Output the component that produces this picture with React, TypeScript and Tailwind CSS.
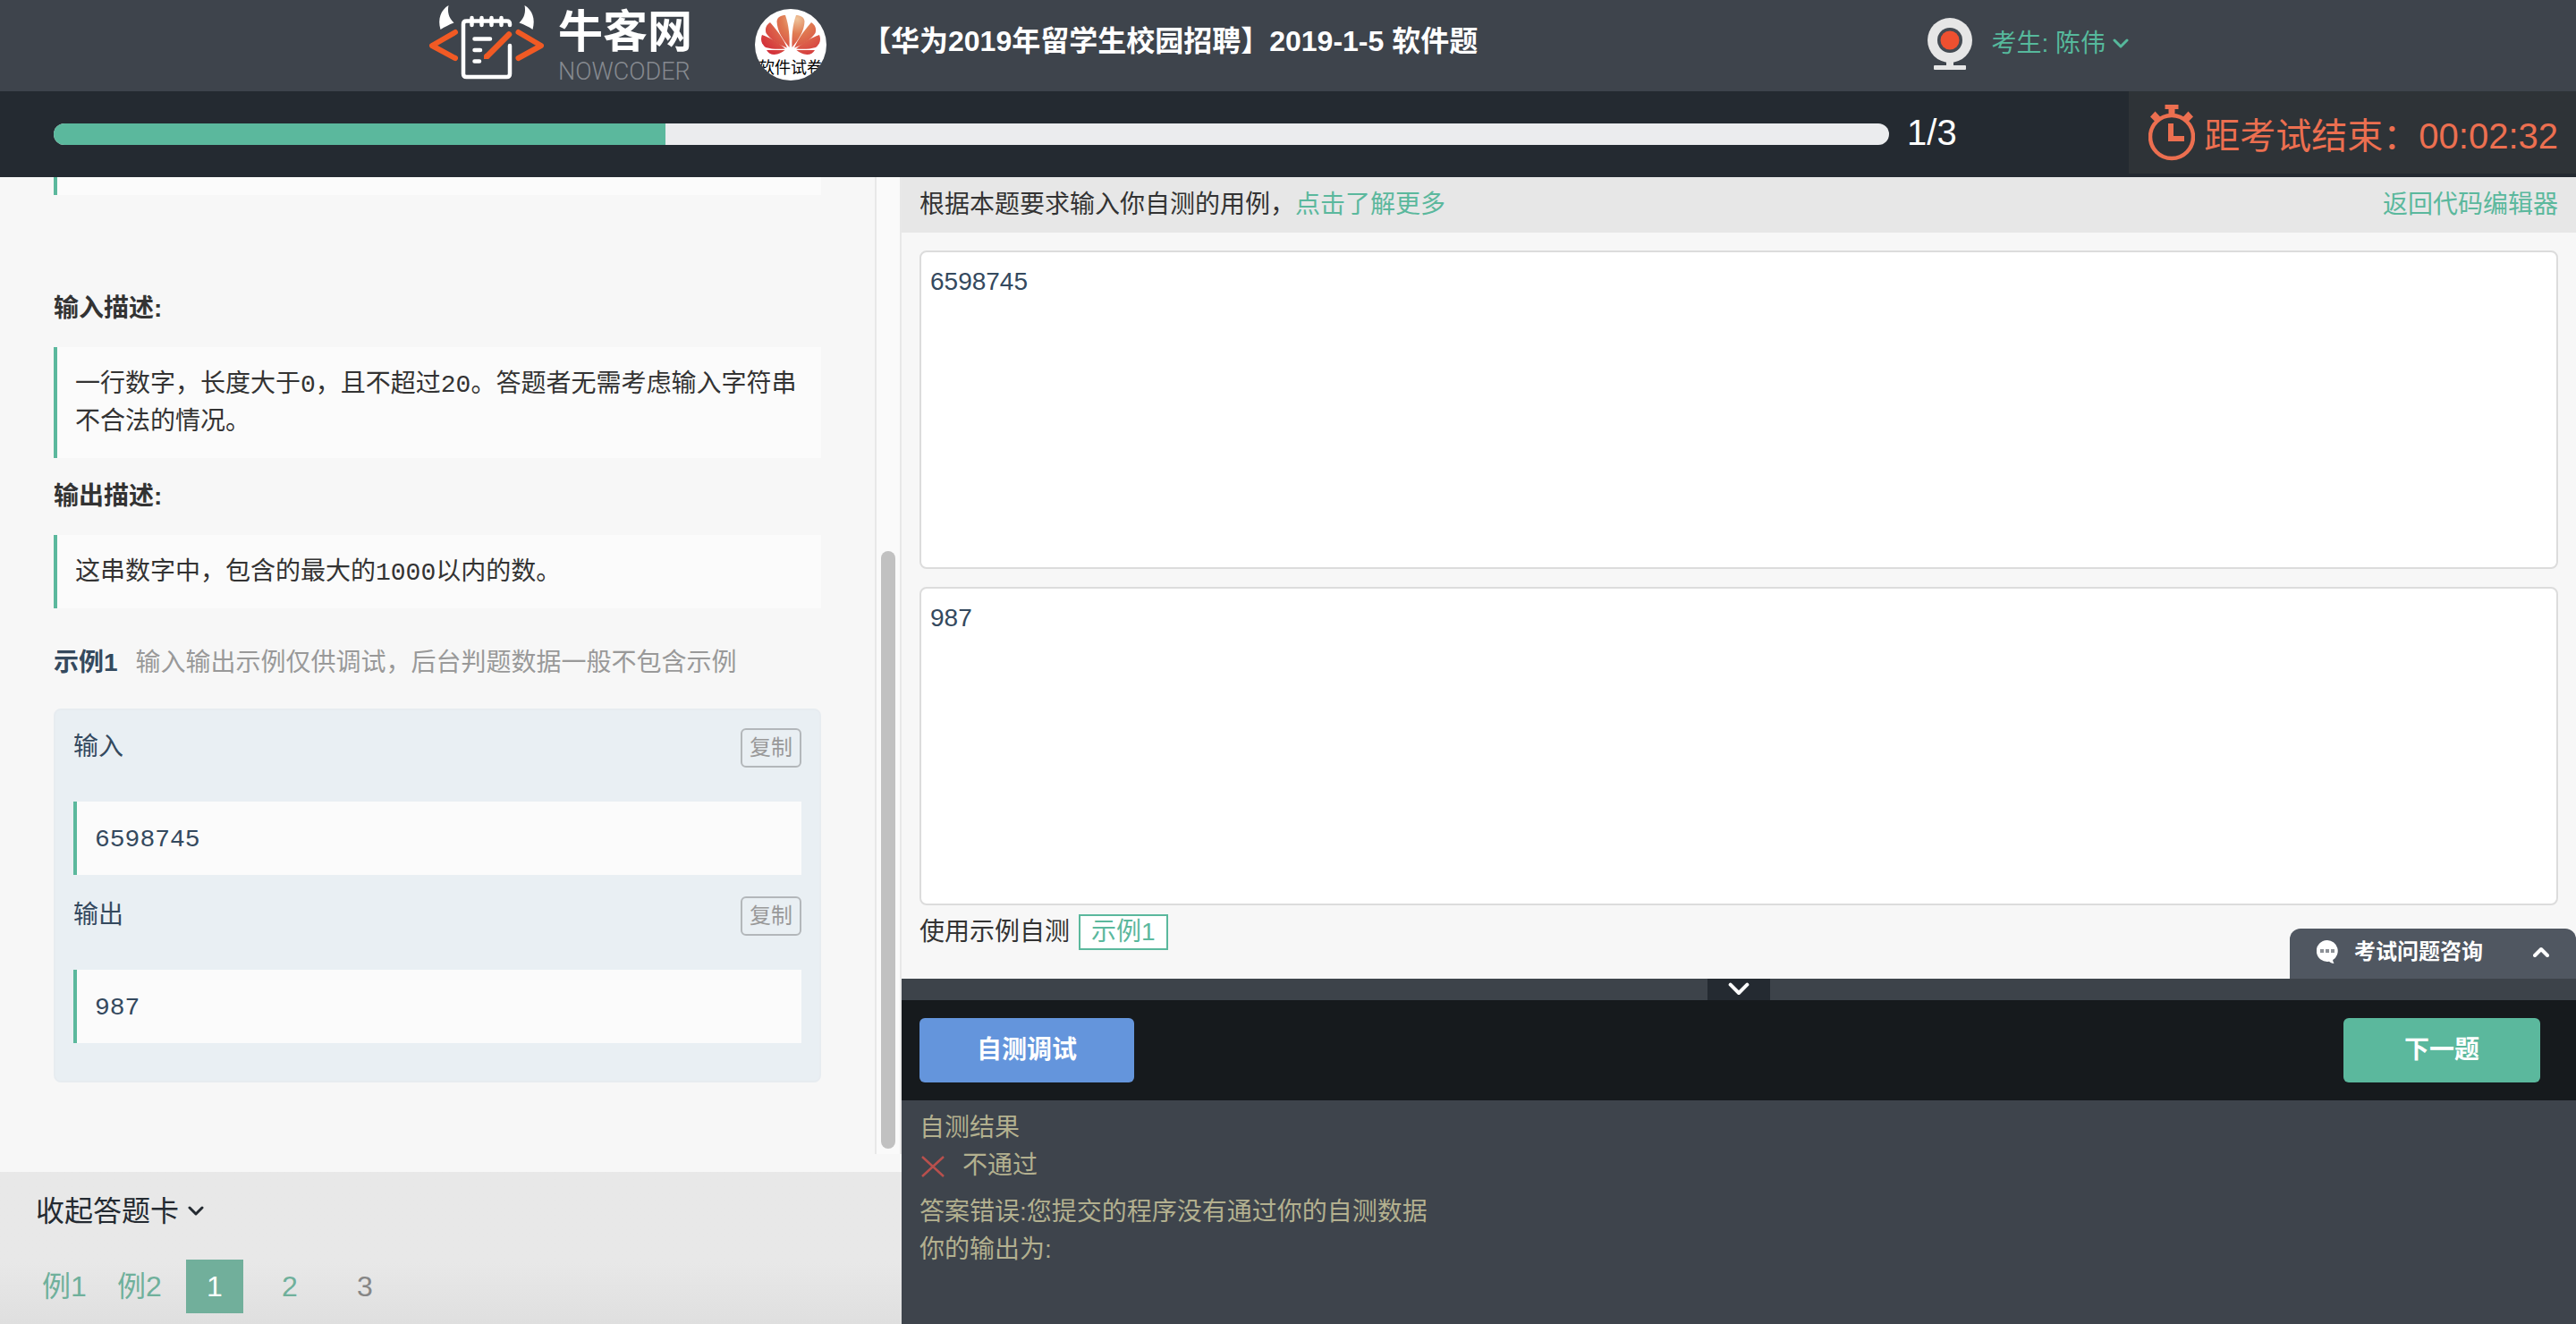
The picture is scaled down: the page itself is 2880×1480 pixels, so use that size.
import { useState } from "react";

const samples = [
  { id: "in", label: "输入", value: "6598745" },
  { id: "out", label: "输出", value: "987" },
];

const questions = [
  { label: "例1", state: "done" },
  { label: "例2", state: "done" },
  { label: "1", state: "current" },
  { label: "2", state: "done" },
  { label: "3", state: "todo" },
];

const questionStyles: Record<string, string> = {
  done: "text-[#6fb09b]",
  current: "bg-[#71af9b] text-white",
  todo: "text-[#868686]",
};

function Chevron({ className, up = false, weight = 3 }: { className: string; up?: boolean; weight?: number }) {
  return (
    <svg className={className} viewBox="0 0 18 12" fill="none" stroke="currentColor" strokeWidth={weight} strokeLinecap="round" strokeLinejoin="round" aria-hidden="true">
      <path d={up ? "M2 10l7-7 7 7" : "M2 2l7 7 7-7"} />
    </svg>
  );
}

function NowcoderMark() {
  return (
    <svg className="h-24 w-32 shrink-0" viewBox="0 0 128 96" fill="none" aria-hidden="true">
      <path d="M21.500 6C13 11 9 21 12.500 33C17.500 30 22 27.500 27.500 25.500C21.500 20 20 13 21.500 6Z" fill="#fff" />
      <path d="M106.500 6C115 11 119 21 115.500 33C111.500 30 106 27.500 100.500 25.500C106.500 20 108 13 106.500 6Z" fill="#fff" />
      <path d="M90 28V27Q90 23.500 86.500 23.500H41.500Q38 23.500 38 27V82.500Q38 86 41.500 86H86.500Q90 86 90 82.500V51" stroke="#fff" strokeWidth="4.500" strokeLinecap="round" />
      <path d="M47.500 20v8M58.500 20v8M69.500 20v8M80.500 20v8" stroke="#fff" strokeWidth="4.500" strokeLinecap="round" />
      <path d="M50.500 43.500H68M50.500 56H57M50.500 68.500H56" stroke="#fff" strokeWidth="4.500" strokeLinecap="round" />
      <path d="M29 36L3 51L29 65M99.500 36L125 51L99.500 65" stroke="#f15a24" strokeWidth="6" strokeLinecap="round" strokeLinejoin="round" />
      <path d="M89 38.500L65 62.500" stroke="#f15a24" strokeWidth="6.500" strokeLinecap="round" />
      <path d="M62.500 60L61 62V66H65.500L67.500 65Z" fill="#f15a24" />
    </svg>
  );
}

function HuaweiBadge() {
  return (
    <div className="relative size-20 shrink-0 overflow-hidden rounded-full bg-white">
      <svg className="size-20" viewBox="0 0 80 80" aria-hidden="true">
        <defs>
          <radialGradient id="petal" gradientUnits="userSpaceOnUse" cx="47" cy="11" r="48">
            <stop offset="0" stopColor="#eec39a" />
            <stop offset="0.350" stopColor="#e07b52" />
            <stop offset="1" stopColor="#d3303a" />
          </radialGradient>
        </defs>
        <g fill="url(#petal)">
          <path d="M38.500 43C39 31 38 18 34 7C29 7 25 9 24.500 14C25 25 31 34 38.500 43Z" />
          <path d="M41.500 43C41 31 42 18 46 7C51 7 55 9 55.500 14C55 25 49 34 41.500 43Z" />
          <path d="M36 43.500C32 34 25 24 17 15C12.500 18 11 22 12.500 27C17 34 26 40 36 43.500Z" />
          <path d="M44 43.500C48 34 55 24 63 15C67.500 18 69 22 67.500 27C63 34 54 40 44 43.500Z" />
          <path d="M34 44.500C25 37 17 32 8 29C6 34 7 39 12 43C19 45 26 45 34 44.500Z" />
          <path d="M46 44.500C55 37 63 32 72 29C74 34 73 39 68 43C61 45 54 45 46 44.500Z" />
          <path d="M33.500 46H13C15 50 20 52 25 50.500C28 49.500 31 48 33.500 46Z" />
          <path d="M46.500 46H67C65 50 60 52 55 50.500C52 49.500 49 48 46.500 46Z" />
        </g>
      </svg>
      <span className="absolute top-14 left-1/2 -translate-x-1/2 text-lg/5 whitespace-nowrap text-black">软件试卷</span>
    </div>
  );
}

function Webcam() {
  return (
    <svg className="h-[58px] w-[52px] shrink-0" viewBox="0 0 52 58" aria-hidden="true">
      <path d="M22 46h8v8h-8z" fill="#e6e6e6" />
      <circle cx="26" cy="25" r="25" fill="#e6e6e6" />
      <circle cx="26" cy="25" r="14" fill="#434a52" />
      <circle cx="26" cy="25" r="10.500" fill="#ee5030" />
      <rect x="8" y="53" width="36" height="5" rx="1" fill="#e6e6e6" />
    </svg>
  );
}

function Stopwatch() {
  return (
    <svg className="h-16 w-[52px] shrink-0" viewBox="0 0 52 64" fill="none" aria-hidden="true">
      <circle cx="26" cy="37" r="24" stroke="#ec6f50" strokeWidth="4.500" />
      <path d="M18.500 1h15v5h-4v6h-7v-6h-4z" fill="#ec6f50" />
      <path d="M2 14.500L7.500 8.500L14 15.500L8 20.500zM50 14.500L44.500 8.500L38 15.500L44 20.500z" fill="#ec6f50" />
      <path d="M22 22h6v14h12v6H22z" fill="#ec6f50" />
    </svg>
  );
}

function Quote({ children }: { children: string }) {
  return (
    <pre className="border-l-4 border-[#5bb89d] bg-[#fbfbfb] px-5 pt-[22px] pb-[18px] font-['Liberation_Mono','Noto_Sans_CJK_SC',monospace] text-[28px]/[42px] whitespace-pre-wrap">
      {children}
    </pre>
  );
}

export default function App() {
  const [input, setInput] = useState("6598745");
  const [expected, setExpected] = useState("987");
  const current = 1;
  const total = 3;

  return (
    <div className="flex h-screen flex-col overflow-hidden bg-[#f7f7f7] font-['Liberation_Sans','Noto_Sans_CJK_SC',sans-serif] text-[28px]/[42px] text-[#333]">
      <header className="h-[102px] shrink-0 bg-[#3e444c]">
        <div className="mx-auto flex h-full max-w-[1920px] items-start">
          <a href="#" className="flex items-start">
            <NowcoderMark />
            <span className="ml-4 flex flex-col pt-3">
              <span className="text-[50px]/[48px] font-bold text-white">牛客网</span>
              <span className="pt-1.5 font-[Roboto,sans-serif] text-[27px]/[28px] font-light text-[#868a90]">NOWCODER</span>
            </span>
          </a>
          <div className="ml-[70px] pt-2.5">
            <HuaweiBadge />
          </div>
          <h1 className="ml-10 pt-[22px] text-[32px]/[48px] font-bold whitespace-nowrap text-white">【华为2019年留学生校园招聘】2019-1-5 软件题</h1>
          <div className="ml-auto flex items-start pr-5">
            <div className="pt-5">
              <Webcam />
            </div>
            <button type="button" className="mt-7 ml-5 flex items-center gap-2 whitespace-nowrap text-[#56b99c]">
              考生: 陈伟
              <Chevron className="h-3 w-[18px]" />
            </button>
          </div>
        </div>
      </header>

      <div className="flex h-24 shrink-0 bg-[#242a31]">
        <div className="flex flex-1 items-center pb-1 pl-[60px]">
          <div className="mt-1 h-6 flex-1 overflow-hidden rounded-full bg-[#ebecee]" role="progressbar" aria-label="答题进度" aria-valuenow={current} aria-valuemax={total}>
            <div className="h-full bg-[#5bb89d]" style={{ width: `${(current / total) * 100}%` }} />
          </div>
          <span className="w-[268px] pl-5 text-[40px]/[48px] text-white">{current}/{total}</span>
        </div>
        <div className="flex h-[92px] w-[500px] items-center justify-end gap-2.5 bg-[#2e3337] pr-5 text-[40px]/[60px] whitespace-nowrap text-[#ec6f50]">
          <Stopwatch />
          <span className="pt-2">距考试结束：00:02:32</span>
        </div>
      </div>

      <main className="flex min-h-0 flex-1">
        <section className="flex w-[35%] shrink-0 flex-col">
          <div className="flex min-h-0 flex-1 pb-5">
            <div className="min-w-0 flex-1 overflow-hidden pr-[60px] pl-[60px]">
              <div className="h-5 border-l-4 border-[#5bb89d] bg-[#fbfbfb]" />
              <h2 className="mt-[106px] mb-[22px] font-bold">输入描述:</h2>
              <Quote>一行数字，长度大于0，且不超过20。答题者无需考虑输入字符串不合法的情况。</Quote>
              <h2 className="my-[22px] font-bold">输出描述:</h2>
              <Quote>这串数字中，包含的最大的1000以内的数。</Quote>
              <div className="mt-10 mb-[30px] flex gap-5 whitespace-nowrap">
                <h2 className="font-bold text-[#34495e]">示例1</h2>
                <p className="text-[#999]">输入输出示例仅供调试，后台判题数据一般不包含示例</p>
              </div>
              <div className="flex flex-col gap-6 rounded-lg border-2 border-[#e7ecf0] bg-[#e9eff3] px-5 pt-5 pb-[42px] text-[#34495e]">
                {samples.map((s) => (
                  <div key={s.id}>
                    <div className="mb-[38px] flex h-11 justify-between">
                      <h3>{s.label}</h3>
                      <button type="button" className="w-[68px] rounded-md border-2 border-[#b3b7ba] text-2xl/10 text-[#999]">
                        复制
                      </button>
                    </div>
                    <Quote>{s.value}</Quote>
                  </div>
                ))}
              </div>
            </div>
            <div className="flex w-[30px] shrink-0 flex-col border-x-2 border-[#e8e8e8] bg-[#fafafa] px-[5px] pb-1.5">
              <div className="mt-auto h-[668px] rounded-full bg-[#c1c1c1]" />
            </div>
          </div>
          <nav className="shrink-0 bg-linear-to-b from-[#e8e8e8] from-60% to-[#dfdfdf] px-10 pt-5 pb-3" aria-label="答题卡">
            <button type="button" className="flex items-center gap-2.5 text-[32px]/[48px] text-[#242a31]">
              收起答题卡
              <Chevron className="h-3 w-[18px]" />
            </button>
            <div className="mt-[30px] flex gap-5">
              {questions.map((q) => (
                <button key={q.label} type="button" className={`h-[60px] w-16 text-[32px]/[56px] whitespace-nowrap ${questionStyles[q.state]}`}>
                  {q.label}
                </button>
              ))}
            </div>
          </nav>
        </section>

        <section className="flex min-w-0 flex-1 flex-col">
          <div className="flex h-[62px] shrink-0 justify-between bg-[#e7e7e7] px-5 pt-2.5">
            <p>
              根据本题要求输入你自测的用例，
              <a href="#" className="text-[#5bb89d]">点击了解更多</a>
            </p>
            <a href="#" className="text-[#5bb89d]">返回代码编辑器</a>
          </div>

          <div className="relative flex min-h-0 flex-1 flex-col px-5 pt-5 pb-8">
            <textarea
              aria-label="自测输入"
              className="min-h-0 flex-1 resize-none rounded-lg border-2 border-[#dcdcdc] bg-white px-2.5 py-3 text-[#34495e] outline-none"
              value={input}
              onChange={(e) => setInput(e.target.value)}
            />
            <textarea
              aria-label="预期输出"
              className="mt-5 min-h-0 flex-1 resize-none rounded-lg border-2 border-[#dcdcdc] bg-white px-2.5 py-3 text-[#34495e] outline-none"
              value={expected}
              onChange={(e) => setExpected(e.target.value)}
            />
            <div className="mt-2.5 flex h-10 items-center gap-2.5">
              <span>使用示例自测</span>
              <button type="button" className="h-10 border-2 border-[#5bb89d] bg-white px-3 text-[28px]/9 text-[#5bb89d]">
                示例1
              </button>
            </div>
            <button type="button" className="absolute right-0 bottom-0 flex h-14 w-80 items-center rounded-t-xl bg-[#505761] pr-[30px] pb-1 pl-[30px] text-2xl/9 font-bold text-white">
              <svg className="h-[26px] w-6" viewBox="0 0 24 26" aria-hidden="true">
                <path d="M12 0a12 12 0 1 0 2 23.800c1 1.200 3 2 5.500 2.200-1-1.500-1.500-2.800-1.300-3.900A12 12 0 0 0 12 0z" fill="#fff" />
                <path d="M4 10h4v4H4zM10 10h4v4h-4zM16 10h4v4h-4z" fill="#8d9197" />
              </svg>
              <span className="ml-[18px]">考试问题咨询</span>
              <Chevron className="ml-auto h-3 w-[18px]" up weight={4} />
            </button>
          </div>

          <div className="flex h-6 shrink-0 justify-center bg-[#3d434a]">
            <button type="button" aria-label="收起结果" className="flex w-[70px] items-center justify-center bg-[#242a31] text-white">
              <Chevron className="h-4 w-6" />
            </button>
          </div>
          <div className="flex h-28 shrink-0 items-center justify-between bg-[#161a1d] pr-10 pl-5 text-white">
            <button type="button" className="h-[72px] w-60 rounded-md bg-[#6495dc] font-bold">自测调试</button>
            <button type="button" className="h-[72px] w-[220px] rounded-md bg-[#5bb89d] font-bold">下一题</button>
          </div>
          <div className="h-[250px] shrink-0 bg-[#3e444c] px-5 pt-2.5 text-[#b3b08f]">
            <p>自测结果</p>
            <p className="flex items-center">
              <svg className="h-7 w-7" viewBox="0 0 28 28" stroke="#b8504d" strokeWidth="2.500" aria-hidden="true">
                <path d="M3 4l24 22M27 4L3 26" />
              </svg>
              <span className="ml-5">不通过</span>
            </p>
            <p className="mt-2.5">答案错误:您提交的程序没有通过你的自测数据</p>
            <p>你的输出为:</p>
          </div>
        </section>
      </main>
    </div>
  );
}
